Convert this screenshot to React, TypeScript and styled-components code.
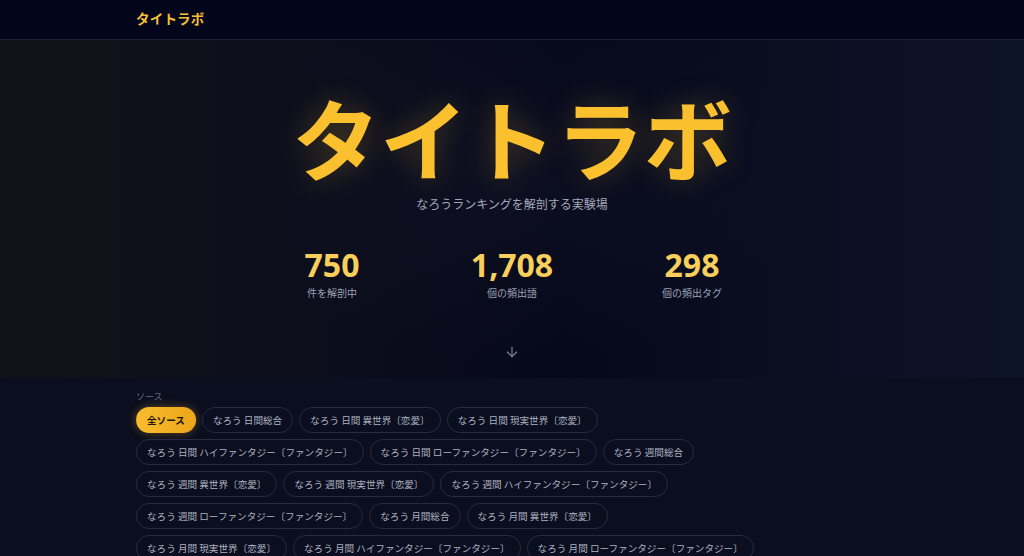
import React from 'react';
import styled, { createGlobalStyle } from 'styled-components';
import { ArrowDown } from 'lucide-react';

const GlobalStyle = createGlobalStyle`
  * { box-sizing: border-box; }
  html, body {
    margin: 0;
    padding: 0;
    background: #0a0e1e;
    font-family: "Noto Sans", "Noto Sans CJK JP", sans-serif;
    overflow: hidden;
  }
`;

const Header = styled.header`
  height: 40px;
  background: #03051a;
  border-bottom: 1px solid #1d2134;
`;

const Container = styled.div`
  max-width: 752px;
  margin: 0 auto;
  height: 100%;
  display: flex;
  align-items: center;
`;

const Brand = styled.div`
  font-family: "Noto Sans CJK JP", sans-serif;
  font-size: 13.5px;
  font-weight: 700;
  color: #f5c038;
  letter-spacing: 0.2px;
  margin-top: -4px;
`;

const Hero = styled.section`
  height: 338px;
  background:
    radial-gradient(ellipse 420px 260px at 512px 140px, rgba(20, 22, 40, 0.5), transparent 70%),
    linear-gradient(90deg, #121318 0%, #0b0d1c 35%, #05081a 55%, #0a0f22 80%, #0e1428 100%);
  display: flex;
  flex-direction: column;
  align-items: center;
  padding-top: 48px;
`;

const Title = styled.h1`
  margin: 0;
  font-family: "Noto Sans CJK JP", sans-serif;
  font-size: 88px;
  line-height: 1.1;
  font-weight: 700;
  color: #fbc02d;
  text-shadow: 0 0 30px rgba(251, 192, 45, 0.26);
`;

const Subtitle = styled.p`
  margin: 10px 0 0;
  font-family: "Noto Sans CJK JP", sans-serif;
  font-size: 12px;
  color: #a3a8bb;
`;

const Stats = styled.div`
  display: grid;
  grid-template-columns: repeat(3, 180px);
  margin-top: 35px;
`;

const Stat = styled.div`
  display: flex;
  flex-direction: column;
  align-items: center;
`;

const StatValue = styled.div`
  font-family: "Noto Sans", sans-serif;
  font-size: 32px;
  font-weight: 700;
  line-height: 1.1;
  color: #f8cf5b;
`;

const StatLabel = styled.div`
  font-family: "Noto Sans CJK JP", sans-serif;
  font-size: 10px;
  color: #9ba0b3;
  margin-top: 3px;
`;

const ScrollHint = styled.div`
  margin-top: 44px;
  color: #80869a;
  display: flex;
`;

const Filters = styled.section`
  background: #0a0e1e;
  padding-top: 12px;
`;

const FilterInner = styled.div`
  max-width: 752px;
  margin: 0 auto;
`;

const FilterLabel = styled.div`
  font-family: "Noto Sans CJK JP", sans-serif;
  font-size: 9px;
  color: #676c80;
  margin-bottom: 4px;
`;

const ChipList = styled.div`
  display: flex;
  flex-wrap: wrap;
  gap: 6px;
  max-width: 626px;
`;

const Chip = styled.button<{ $active?: boolean }>`
  height: 26px;
  padding: 0 10px;
  border-radius: 13px;
  font-family: "Noto Sans CJK JP", sans-serif;
  font-size: 9.6px;
  white-space: nowrap;
  cursor: pointer;
  border: 1px solid ${({ $active }) => ($active ? 'transparent' : '#262b40')};
  background: ${({ $active }) =>
    $active ? 'linear-gradient(90deg, #f7bd2e, #eea51a)' : 'transparent'};
  color: ${({ $active }) => ($active ? '#1a1403' : '#aeb2c2')};
  font-weight: ${({ $active }) => ($active ? 700 : 400)};
  box-shadow: ${({ $active }) => ($active ? '0 0 10px rgba(247, 180, 40, 0.35)' : 'none')};
`;

const sources = [
  'なろう 日間総合',
  'なろう 日間 異世界〔恋愛〕',
  'なろう 日間 現実世界〔恋愛〕',
  'なろう 日間 ハイファンタジー〔ファンタジー〕',
  'なろう 日間 ローファンタジー〔ファンタジー〕',
  'なろう 週間総合',
  'なろう 週間 異世界〔恋愛〕',
  'なろう 週間 現実世界〔恋愛〕',
  'なろう 週間 ハイファンタジー〔ファンタジー〕',
  'なろう 週間 ローファンタジー〔ファンタジー〕',
  'なろう 月間総合',
  'なろう 月間 異世界〔恋愛〕',
  'なろう 月間 現実世界〔恋愛〕',
  'なろう 月間 ハイファンタジー〔ファンタジー〕',
  'なろう 月間 ローファンタジー〔ファンタジー〕',
];

const stats = [
  { value: '750', label: '件を解剖中' },
  { value: '1,708', label: '個の頻出語' },
  { value: '298', label: '個の頻出タグ' },
];

const App: React.FC = () => {
  return (
    <>
      <GlobalStyle />
      <Header>
        <Container>
          <Brand>タイトラボ</Brand>
        </Container>
      </Header>
      <Hero>
        <Title>タイトラボ</Title>
        <Subtitle>なろうランキングを解剖する実験場</Subtitle>
        <Stats>
          {stats.map((s) => (
            <Stat key={s.label}>
              <StatValue>{s.value}</StatValue>
              <StatLabel>{s.label}</StatLabel>
            </Stat>
          ))}
        </Stats>
        <ScrollHint>
          <ArrowDown size={16} strokeWidth={1.7} />
        </ScrollHint>
      </Hero>
      <Filters>
        <FilterInner>
          <FilterLabel>ソース</FilterLabel>
          <ChipList>
            <Chip $active>全ソース</Chip>
            {sources.map((s) => (
              <Chip key={s}>{s}</Chip>
            ))}
          </ChipList>
        </FilterInner>
      </Filters>
    </>
  );
};

export default App;
